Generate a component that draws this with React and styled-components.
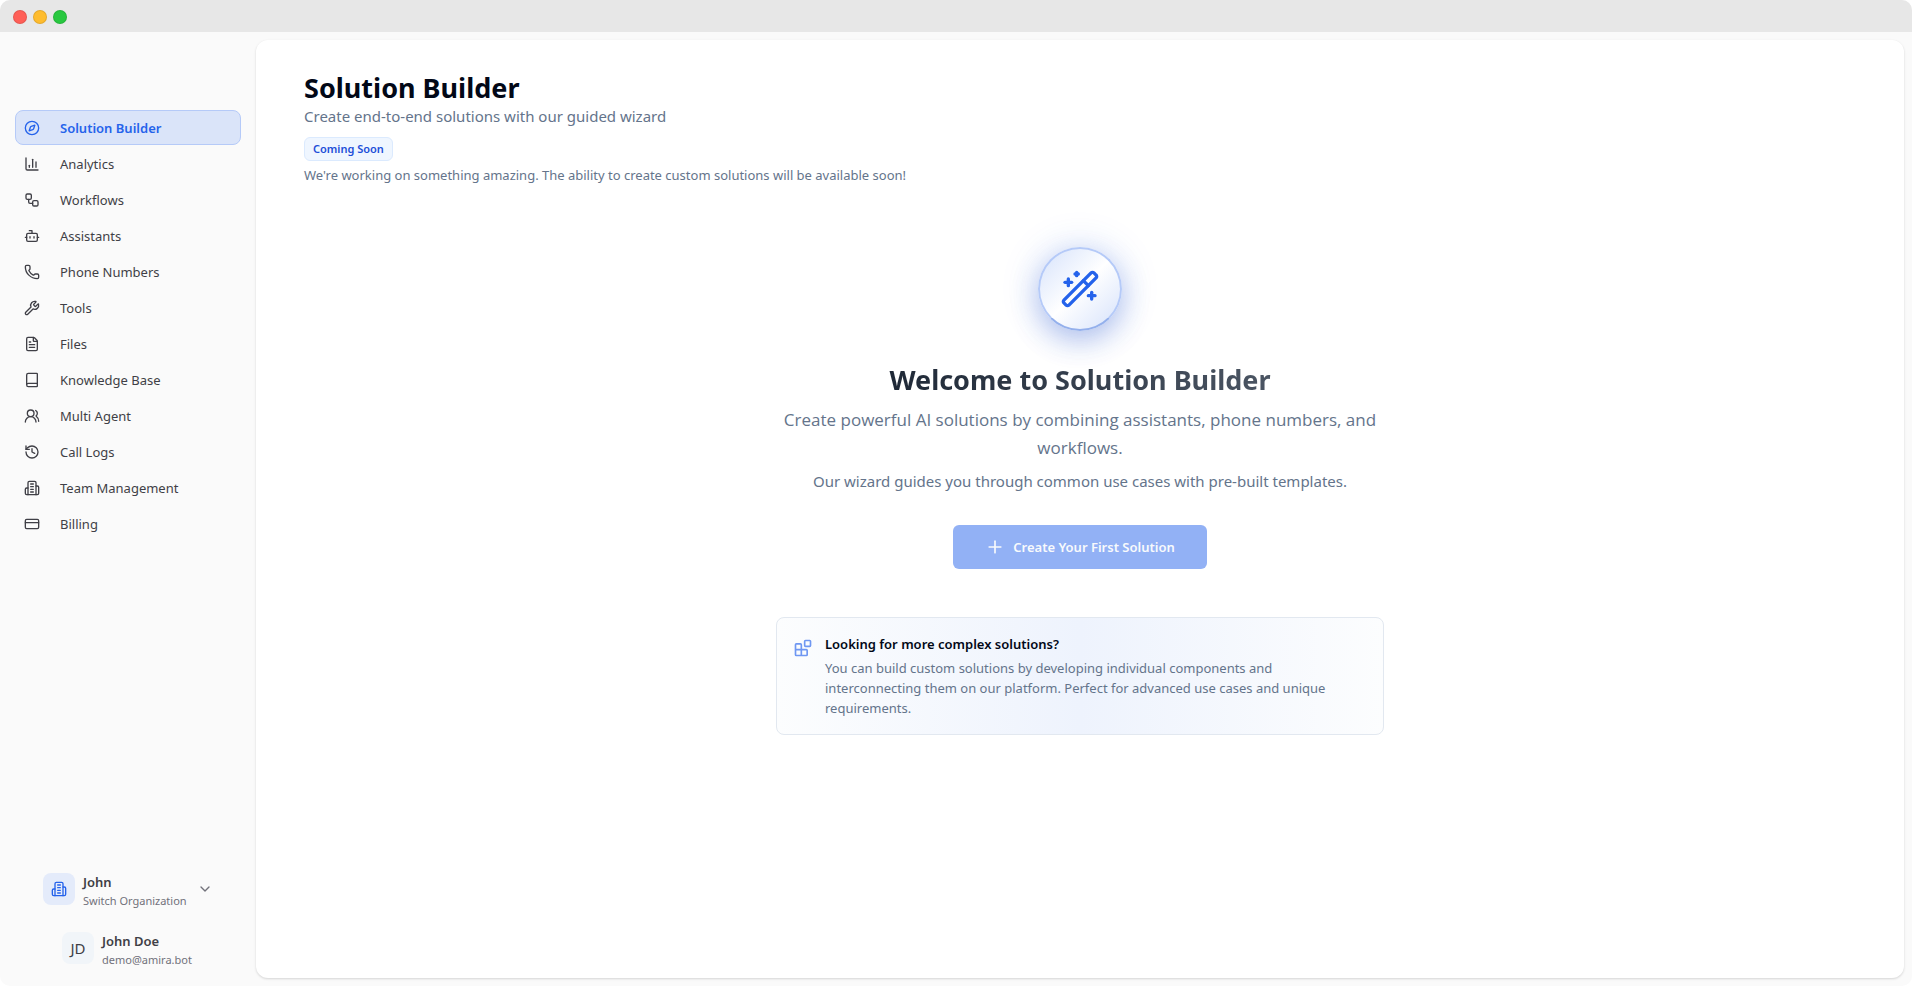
import React from "react";
import styled, { createGlobalStyle, css } from "styled-components";
import {
  Compass, ChartColumn, Workflow, Bot, Phone, Wrench, FileText, Book, UsersRound,
  History, CreditCard, ChevronDown, WandSparkles, Plus,
} from "lucide-react";

const GlobalStyle = createGlobalStyle`
  *, *::before, *::after { box-sizing: border-box; }
  body {
    margin: 0;
    background: #ffffff;
    font-family: "Noto Sans", "Open Sans", sans-serif;
    color: #020817;
  }
  h1, h2, h3, p, ul { margin: 0; padding: 0; }
  button { font: inherit; }
`;

const Window = styled.div`
  display: flex;
  flex-direction: column;
  min-height: 100vh;
  border-radius: 10px;
  overflow: hidden;
  background: #fafafa;
`;

const TitleBar = styled.header`
  display: flex;
  align-items: center;
  gap: 6px;
  height: 32px;
  padding: 2px 13px 0;
  background: #e7e7e7;
`;

const Light = styled.span`
  width: 14px;
  height: 14px;
  border-radius: 50%;
  border: 1px solid rgba(0, 0, 0, 0.1);
  background: ${(p) => p.$color};
`;

const Body = styled.div`
  display: flex;
  flex: 1;
`;

const Sidebar = styled.aside`
  display: flex;
  flex-direction: column;
  justify-content: space-between;
  flex: 0 0 256px;
  padding: 78px 15px 16px;
`;

const NavList = styled.ul`
  display: flex;
  flex-direction: column;
  gap: 1px;
  list-style: none;
`;

const NavLink = styled.a`
  display: flex;
  align-items: center;
  gap: 20px;
  height: 35px;
  padding: 0 8px;
  border: 1px solid transparent;
  border-radius: 8px;
  font-size: 13px;
  line-height: 20px;
  color: #3f3f46;
  text-decoration: none;
  ${(p) => p.$active && css`
    background: #dae4f9;
    border-color: #b5caf8;
    color: #2563eb;
    font-weight: 600;
  `}
`;

const Accounts = styled.div`
  display: flex;
  flex-direction: column;
  gap: 21px;
`;

const AccountRow = styled.button`
  display: flex;
  align-items: flex-start;
  gap: 8px;
  padding: 0 0 0 ${(p) => p.$indent};
  border: 0;
  background: none;
  text-align: left;
  color: #71717a;
`;

const Avatar = styled.span`
  display: grid;
  place-items: center;
  width: 32px;
  height: 32px;
  border-radius: 8px;
  background: ${(p) => (p.$tinted ? "#e4ebfa" : "#f1f5f9")};
  color: ${(p) => (p.$tinted ? "#2563eb" : "#3f3f46")};
  font-size: 15px;
`;

const AccountText = styled.span`
  display: flex;
  flex-direction: column;
`;

const AccountName = styled.span`
  font-size: 13px;
  line-height: 18px;
  font-weight: 600;
  color: #3f3f46;
`;

const AccountNote = styled.span`
  font-size: 11px;
  line-height: 20px;
  color: #71717a;
`;

const Chevron = styled(ChevronDown)`
  margin: 8px 0 0 2px;
`;

const Panel = styled.main`
  flex: 1;
  min-width: 0;
  margin: 8px 8px 8px 0;
  padding: 31px 48px;
  border-radius: 12px;
  background: #ffffff;
  box-shadow: 0 1px 3px rgba(0, 0, 0, 0.1), 0 1px 2px rgba(0, 0, 0, 0.06);
`;

const PageHead = styled.div`
  display: flex;
  flex-direction: column;
  align-items: flex-start;
`;

const PageTitle = styled.h1`
  font-size: 27px;
  line-height: 33px;
  font-weight: 700;
`;

const PageLead = styled.p`
  font-size: 15px;
  line-height: 24px;
  color: #64748b;
`;

const Badge = styled.span`
  margin: 9px 0 4px;
  padding: 3px 8px;
  border: 1px solid #dbeafe;
  border-radius: 6px;
  background: #eff6ff;
  font-size: 11px;
  line-height: 16px;
  font-weight: 600;
  color: #1d4ed8;
`;

const PageNote = styled.p`
  font-size: 13px;
  line-height: 20px;
  color: #64748b;
`;

const Hero = styled.section`
  display: flex;
  flex-direction: column;
  align-items: center;
  width: 100%;
  max-width: 608px;
  margin: 62px auto 0;
  text-align: center;
  color: #64748b;
`;

const HeroIcon = styled.div`
  display: grid;
  place-items: center;
  width: 84px;
  height: 84px;
  border: 2px solid #b5caf8;
  border-bottom-color: #94b0ec;
  border-radius: 50%;
  background: linear-gradient(135deg, #d3e0fb 0%, #ffffff 50%, #d3e0fb 100%) border-box;
  box-shadow: 0 0 40px rgba(37, 99, 235, 0.16), 0 10px 28px rgba(37, 80, 200, 0.3);
  color: #2563eb;
`;

const HeroTitle = styled.h2`
  margin-top: 31px;
  font-size: 27px;
  line-height: 36px;
  font-weight: 700;
  background: linear-gradient(90deg, #1f2937, #4b5563);
  background-clip: text;
  color: transparent;
`;

const HeroLead = styled.p`
  margin-top: 8px;
  font-family: "Open Sans", "Noto Sans", sans-serif;
  font-size: 17px;
  line-height: 28px;
`;

const HeroNote = styled.p`
  margin-top: 7px;
  font-size: 15px;
  line-height: 24px;
`;

const CreateButton = styled.button`
  display: flex;
  align-items: center;
  gap: 8px;
  height: 44px;
  margin-top: 32px;
  padding: 0 32px;
  border: 0;
  border-radius: 6px;
  background: #92b1f5;
  font-size: 13px;
  font-weight: 600;
  color: #f8fafc;
`;

const InfoCard = styled.aside`
  display: flex;
  align-items: flex-start;
  gap: 12px;
  width: 100%;
  margin-top: 48px;
  padding: 16px;
  border: 1px solid #e2e8f0;
  border-radius: 8px;
  background: linear-gradient(90deg, #fcfdfe, #eef3fd 50%, #fcfdfe);
  text-align: left;
`;

const InfoIcon = styled.span`
  display: flex;
  flex: none;
  padding-top: 4px;
  color: #6f97f2;
`;

const InfoTitle = styled.h3`
  font-size: 13px;
  line-height: 20px;
  font-weight: 600;
  color: #020817;
`;

const InfoText = styled.p`
  margin-top: 4px;
  font-size: 13px;
  line-height: 20px;
`;

const LineIcon = ({ size, children }) => (
  <svg
    width={size} height={size} viewBox="0 0 24 24" fill="none" stroke="currentColor"
    strokeWidth="2" strokeLinecap="round" strokeLinejoin="round" aria-hidden="true"
  >
    {children}
  </svg>
);

const BuildingIcon = ({ size }) => (
  <LineIcon size={size}>
    <path d="M6 22V4a2 2 0 0 1 2-2h8a2 2 0 0 1 2 2v18Z" />
    <path d="M6 12H4a2 2 0 0 0-2 2v6a2 2 0 0 0 2 2h2" />
    <path d="M18 9h2a2 2 0 0 1 2 2v9a2 2 0 0 1-2 2h-2" />
    <path d="M10 6h4M10 10h4M10 14h4M10 18h4" />
  </LineIcon>
);

const BlocksIcon = ({ size }) => (
  <LineIcon size={size}>
    <rect width="7" height="7" x="14" y="3" rx="1" />
    <path d="M10 21V8a1 1 0 0 0-1-1H4a1 1 0 0 0-1 1v12a1 1 0 0 0 1 1h12a1 1 0 0 0 1-1v-5a1 1 0 0 0-1-1H3" />
  </LineIcon>
);

const NAV = [
  ["Solution Builder", Compass],
  ["Analytics", ChartColumn],
  ["Workflows", Workflow],
  ["Assistants", Bot],
  ["Phone Numbers", Phone],
  ["Tools", Wrench],
  ["Files", FileText],
  ["Knowledge Base", Book],
  ["Multi Agent", UsersRound],
  ["Call Logs", History],
  ["Team Management", BuildingIcon],
  ["Billing", CreditCard],
];

export default function App() {
  return (
    <Window>
      <GlobalStyle />
      <TitleBar>
        <Light $color="#ff5f57" />
        <Light $color="#febc2e" />
        <Light $color="#28c840" />
      </TitleBar>
      <Body>
        <Sidebar>
          <nav>
            <NavList>
              {NAV.map(([label, Icon], i) => (
                <li key={label}>
                  <NavLink href="#" $active={i === 0}>
                    <Icon size={16} />
                    {label}
                  </NavLink>
                </li>
              ))}
            </NavList>
          </nav>
          <Accounts>
            <AccountRow type="button" $indent="28px">
              <Avatar $tinted><BuildingIcon size={16} /></Avatar>
              <AccountText>
                <AccountName>John</AccountName>
                <AccountNote>Switch Organization</AccountNote>
              </AccountText>
              <Chevron size={16} />
            </AccountRow>
            <AccountRow type="button" $indent="47px">
              <Avatar>JD</Avatar>
              <AccountText>
                <AccountName>John Doe</AccountName>
                <AccountNote>demo@amira.bot</AccountNote>
              </AccountText>
            </AccountRow>
          </Accounts>
        </Sidebar>
        <Panel>
          <PageHead>
            <PageTitle>Solution Builder</PageTitle>
            <PageLead>Create end-to-end solutions with our guided wizard</PageLead>
            <Badge>Coming Soon</Badge>
            <PageNote>
              We're working on something amazing. The ability to create custom solutions will be available soon!
            </PageNote>
          </PageHead>
          <Hero>
            <HeroIcon><WandSparkles size={40} /></HeroIcon>
            <HeroTitle>Welcome to Solution Builder</HeroTitle>
            <HeroLead>
              Create powerful AI solutions by combining assistants, phone numbers, and workflows.
            </HeroLead>
            <HeroNote>Our wizard guides you through common use cases with pre-built templates.</HeroNote>
            <CreateButton type="button">
              <Plus size={20} strokeWidth={2} />
              Create Your First Solution
            </CreateButton>
            <InfoCard>
              <InfoIcon><BlocksIcon size={20} /></InfoIcon>
              <div>
                <InfoTitle>Looking for more complex solutions?</InfoTitle>
                <InfoText>
                  You can build custom solutions by developing individual components and interconnecting
                  them on our platform. Perfect for advanced use cases and unique requirements.
                </InfoText>
              </div>
            </InfoCard>
          </Hero>
        </Panel>
      </Body>
    </Window>
  );
}
